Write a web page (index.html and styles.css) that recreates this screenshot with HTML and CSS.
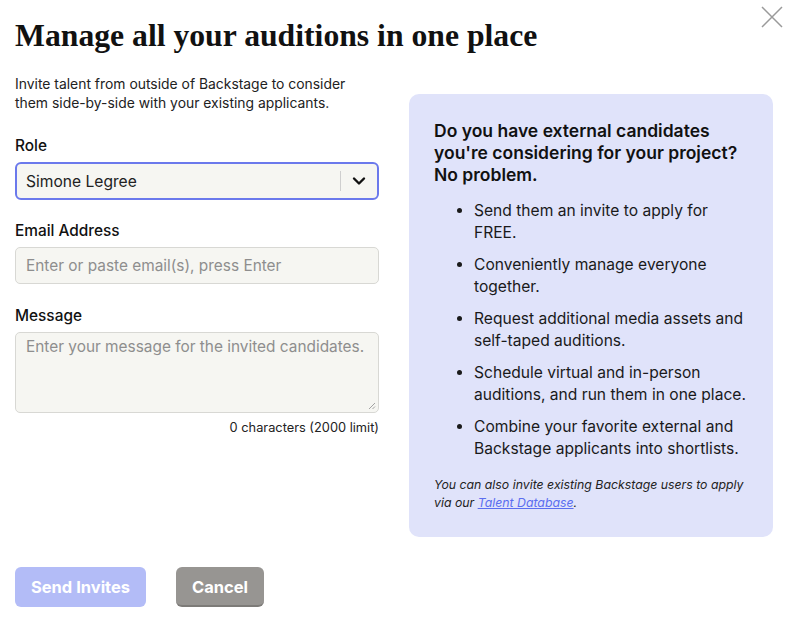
FILE: index.html
```html
<!DOCTYPE html>
<html>
<head>
<meta charset="utf-8">
<link rel="stylesheet" href="styles.css">
</head>
<body>
<div class="modal">
  <button class="close" aria-label="Close">
    <svg width="22" height="22" viewBox="0 0 22 22"><path d="M1 1L21 21M21 1L1 21" stroke="#9a9a9a" stroke-width="1.5" fill="none"/></svg>
  </button>
  <h1 class="title">Manage all your auditions in one place</h1>
  <div class="columns">
    <div class="form">
      <p class="intro">Invite talent from outside of Backstage to consider them side-by-side with your existing applicants.</p>
      <label class="label">Role</label>
      <div class="select">
        <span class="select-value">Simone Legree</span>
        <span class="select-sep"></span>
        <svg class="chev" width="14" height="10" viewBox="0 0 14 10"><path d="M2 2.5L7 7.5L12 2.5" stroke="#111" stroke-width="2.4" fill="none" stroke-linecap="round" stroke-linejoin="round"/></svg>
      </div>
      <label class="label">Email Address</label>
      <div class="input"><span class="placeholder">Enter or paste email(s), press Enter</span></div>
      <label class="label">Message</label>
      <div class="textarea">
        <span class="placeholder">Enter your message for the invited candidates.</span>
        <svg class="grip" width="8" height="8" viewBox="0 0 8 8"><path d="M7 1L1 7M7 4.5L4.5 7" stroke="#999" stroke-width="0.9"/></svg>
      </div>
      <div class="counter">0 characters (2000 limit)</div>
    </div>
    <div class="panel">
      <h2 class="panel-title">Do you have external candidates you're considering for your project? No problem.</h2>
      <ul class="list">
        <li>Send them an invite to apply for FREE.</li>
        <li>Conveniently manage everyone together.</li>
        <li>Request additional media assets and self-taped auditions.</li>
        <li>Schedule virtual and in-person auditions, and run them in one place.</li>
        <li>Combine your favorite external and Backstage applicants into shortlists.</li>
      </ul>
      <p class="note">You can also invite existing Backstage users to apply via our <a href="#" class="link">Talent Database</a>.</p>
    </div>
  </div>
  <div class="actions">
    <button class="btn btn-primary">Send Invites</button>
    <button class="btn btn-secondary">Cancel</button>
  </div>
</div>
</body>
</html>
```
FILE: styles.css
```css
* { box-sizing: border-box; }
html, body { margin: 0; padding: 0; background: #fff; }
body { font-family: Inter, "Noto Sans", sans-serif; color: #1a1a1a; }
.modal { position: relative; width: 789px; height: 622px; padding: 17px 15px 0 15px; }
.close { position: absolute; top: 6px; right: 6px; background: none; border: 0; padding: 0; width: 22px; height: 22px; }
.title { margin: 0; font-family: "Liberation Serif", "Times New Roman", serif; font-size: 31.7px; line-height: 38px; font-weight: 700; color: #111; }
.columns { display: flex; gap: 30px; align-items: flex-start; margin-top: 20px; }
.form { width: 364px; display: flex; flex-direction: column; }
.intro { margin: 0 0 23px 0; font-size: 13.9px; line-height: 19px; color: #222; }
.label { font-size: 15.4px; line-height: 20px; font-weight: 500; color: #111; margin-bottom: 6px; }
.select { height: 38px; border: 2px solid #6b79ec; border-radius: 6px; background: #f6f6f2; display: flex; align-items: center; padding: 0 11px 0 9px; margin-bottom: 21px; }
.select-value { flex: 1; font-size: 15.6px; color: #222; }
.select-sep { width: 1px; height: 20px; background: #cfcfcf; margin-right: 11px; }
.chev { display: block; }
.input { height: 37px; border: 1px solid #d8d8d4; border-radius: 5px; background: #f6f6f2; display: flex; align-items: center; padding: 0 10px; margin-bottom: 22px; }
.placeholder { font-size: 15.4px; color: #8e8e8e; }
.textarea { position: relative; height: 81px; border: 1px solid #d8d8d4; border-radius: 5px; background: #f6f6f2; padding: 3px 10px; }
.grip { position: absolute; right: 2px; bottom: 2px; }
.counter { text-align: right; font-size: 12.8px; line-height: 18px; margin-top: 6px; color: #222; }
.panel { width: 364px; margin-top: 19px; background: #e0e3fa; border-radius: 10px; padding: 26px 25px 25px 25px; }
.panel-title { margin: 0 0 14px 0; font-size: 17.5px; line-height: 22px; font-weight: 600; color: #111; }
.list { margin: 0; padding: 0 0 0 40px; font-size: 15.6px; line-height: 22px; color: #1a1a1a; }
.list li { margin-bottom: 10px; }
.note { margin: 16px 0 0 0; font-size: 12.3px; line-height: 18px; font-style: italic; color: #222; }
.link { color: #5b6ef0; text-decoration: underline; }
.actions { display: flex; gap: 30px; margin-top: 30px; }
.btn { height: 40px; border: 0; border-radius: 6px; font-family: Inter, "Noto Sans", sans-serif; font-size: 16.5px; font-weight: 700; color: #fff; padding: 0; }
.btn-primary { background: #b3bcf7; width: 131px; }
.btn-secondary { background: #979592; width: 88px; border-bottom: 2px solid #7d7b78; padding-top: 2px; }
```
